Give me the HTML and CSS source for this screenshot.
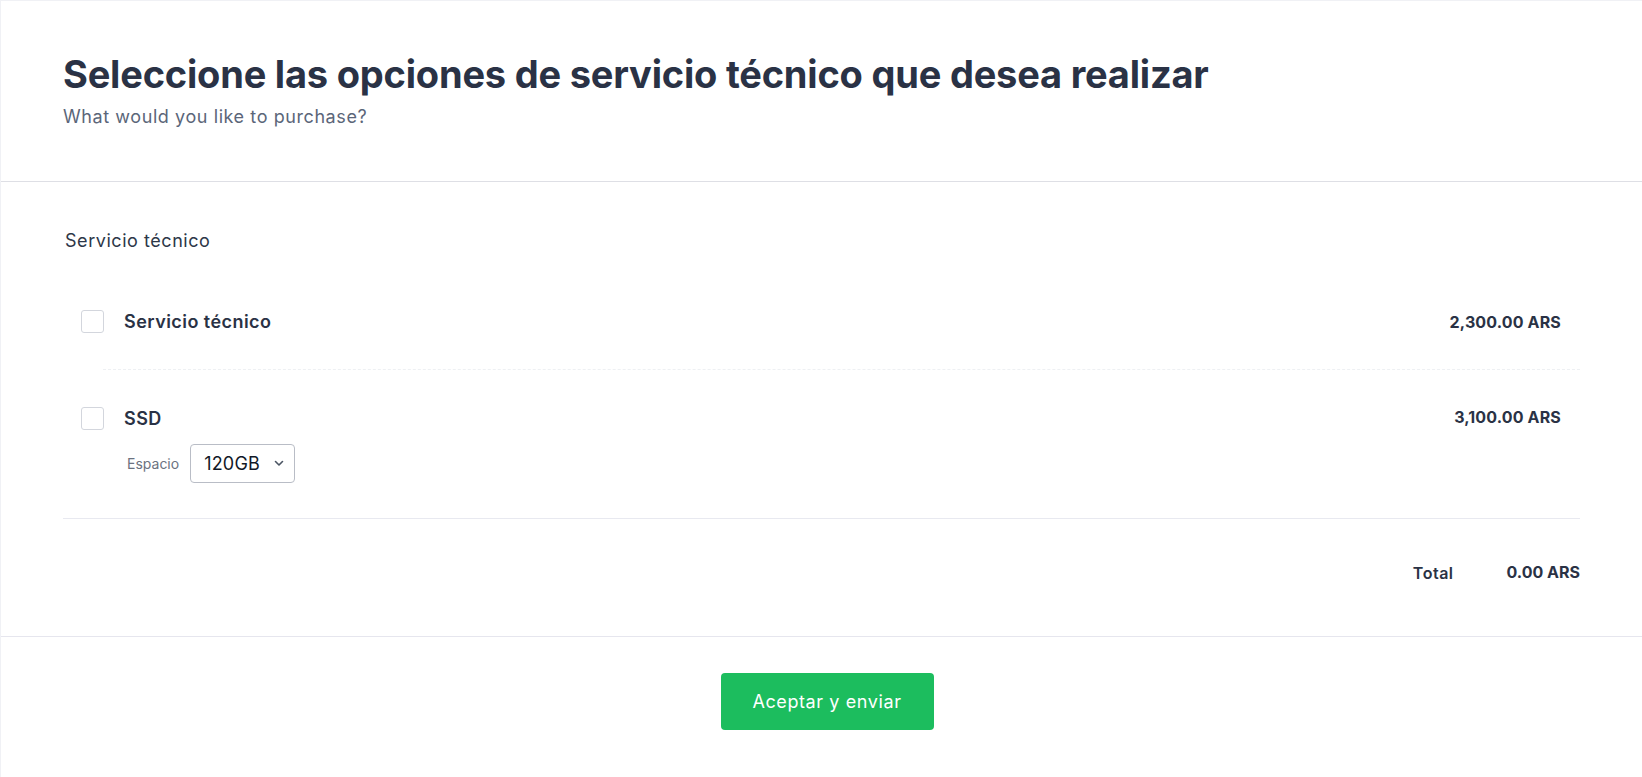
FILE: index.html
```html
<!DOCTYPE html>
<html lang="es">
<head>
<meta charset="utf-8">
<title>Servicio técnico</title>
<link rel="stylesheet" href="styles.css">
</head>
<body>
<div class="card">
  <header class="head">
    <h1 class="title">Seleccione las opciones de servicio técnico que desea realizar</h1>
    <p class="subtitle">What would you like to purchase?</p>
  </header>
  <section class="body">
    <h2 class="section-label">Servicio técnico</h2>
    <ul class="items">
      <li class="item">
        <div class="item-row">
          <span class="check"></span>
          <span class="item-name">Servicio técnico</span>
          <span class="price">2,300.00 ARS</span>
        </div>
      </li>
      <li class="sep"></li>
      <li class="item">
        <div class="item-row">
          <span class="check"></span>
          <span class="item-name">SSD</span>
          <span class="price price-2">3,100.00 ARS</span>
        </div>
        <div class="option">
          <span class="option-label">Espacio</span>
          <div class="select">
            <span class="select-value">120GB</span>
            <svg class="chev" width="10" height="7" viewBox="0 0 10 7"><path d="M1.5 1.5 L5 5 L8.5 1.5" fill="none" stroke="#4b5563" stroke-width="1.6" stroke-linecap="round" stroke-linejoin="round"/></svg>
          </div>
        </div>
      </li>
    </ul>
    <div class="total">
      <span class="total-label">Total</span>
      <span class="total-value">0.00 ARS</span>
    </div>
  </section>
  <footer class="foot">
    <button class="submit" type="button">Aceptar y enviar</button>
  </footer>
</div>
</body>
</html>
```
FILE: styles.css
```css
* { box-sizing: border-box; }
html, body { margin: 0; padding: 0; background: #ffffff; }
body {
  font-family: Inter, "Noto Sans", "Liberation Sans", sans-serif;
  color: #2d3748;
}
.card {
  min-height: 777px;
  border-top: 1px solid #f0f1f5;
  border-left: 1px solid #f0f1f5;
  background: #fff;
}
.head {
  padding: 50px 62px 52px 62px;
  border-bottom: 1px solid #dedfe5;
}
.title {
  margin: 0;
  font-size: 38px;
  line-height: 46px;
  font-weight: 700;
  color: #2a3245;
  letter-spacing: -0.2px;
}
.subtitle {
  margin: 8px 0 0 0;
  font-size: 18px;
  line-height: 24px;
  color: #5b6679;
  letter-spacing: 0.58px;
}
.body {
  padding: 45px 62px 52px 62px;
  border-bottom: 1px solid #e6e6ee;
}
.section-label {
  margin: 0;
  padding-left: 2px;
  font-size: 18px;
  line-height: 28px;
  font-weight: 400;
  color: #2d3748;
  letter-spacing: 0.55px;
}
.items {
  list-style: none;
  margin: 53px 0 0 0;
  padding: 0;
}
.item {
  padding: 0 19px 0 18px;
}
.item-row {
  display: flex;
  align-items: flex-start;
  height: 28px;
}
.check {
  width: 23px;
  height: 23px;
  margin-top: 2px;
  border: 1px solid #d3d6dd;
  border-radius: 3px;
  background: #fff;
  flex: none;
}
.item-name {
  margin-left: 20px;
  font-size: 18px;
  line-height: 28px;
  font-weight: 600;
  color: #2a3245;
  letter-spacing: 0.45px;
}
.price {
  margin-left: auto;
  font-size: 16px;
  line-height: 28px;
  font-weight: 700;
  color: #2a3245;
  letter-spacing: 0.15px;
}
.price-2 { line-height: 24px; }
.sep {
  margin: 33px 0 35px 40px;
  border-top: 1px dashed #eef0f3;
}
.option {
  display: flex;
  align-items: center;
  margin: 11px 0 0 46px;
}
.option-label {
  font-size: 14px;
  line-height: 20px;
  color: #6b7280;
  margin-right: 11px;
}
.select {
  display: flex;
  align-items: center;
  width: 105px;
  height: 39px;
  padding: 0 10px 0 13px;
  border: 1px solid #b9bdc6;
  border-radius: 4px;
  background: #fff;
}
.select-value {
  font-size: 18px;
  line-height: 24px;
  color: #111827;
  letter-spacing: 0.2px;
}
.chev { margin-left: auto; }
.total {
  display: flex;
  justify-content: flex-end;
  align-items: baseline;
  gap: 53px;
  margin-top: 35px;
  padding-top: 41px;
  border-top: 1px solid #e8e9f0;
  font-size: 16px;
  line-height: 24px;
  font-weight: 700;
  color: #2a3245;
}
.total-label { position: relative; top: 1px; font-weight: 600; letter-spacing: 0.5px; }
.foot {
  display: flex;
  justify-content: center;
  padding: 36px 0 0 11px;
}
.submit {
  width: 213px;
  height: 57px;
  border: none;
  border-radius: 4px;
  background: #1cbd5e;
  color: #fff;
  font-family: Inter, "Noto Sans", "Liberation Sans", sans-serif;
  font-size: 18px;
  line-height: 27px;
  font-weight: 400;
  letter-spacing: 0.6px;
  cursor: pointer;
}
```
